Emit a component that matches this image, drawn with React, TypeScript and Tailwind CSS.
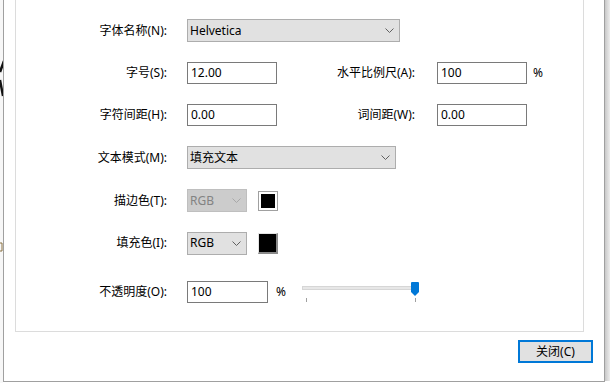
import React from 'react';

const Chevron = ({ color = '#606060' }: { color?: string }) => (
  <svg width="9" height="5" viewBox="0 0 9 5" className="shrink-0">
    <polyline points="0.5,0.5 4.5,4.5 8.5,0.5" fill="none" stroke={color} strokeWidth="1" />
  </svg>
);

function Select({ value, width, disabled }: { value: string; width: string; disabled?: boolean }) {
  return (
    <div
      className={`${width} h-[23px] flex items-center justify-between pl-[2px] pr-[5px] border ${
        disabled ? 'bg-[#cccccc] border-[#bfbfbf] text-[#838383]' : 'bg-[#e1e1e1] border-[#adadad] text-black'
      }`}
    >
      <span>{value}</span>
      <Chevron color={disabled ? '#a8a8a8' : '#606060'} />
    </div>
  );
}

function Field({ value, width }: { value: string; width: string }) {
  return (
    <div className={`${width} h-[22px] flex items-center pl-[3px] border border-[#7a7a7a] bg-white`}>
      {value}
    </div>
  );
}

function Label({ text, width = 'w-[151px]' }: { text: string; width?: string }) {
  return <div className={`${width} shrink-0 text-right`}>{text}</div>;
}

export default function App() {
  return (
    <div className="w-[610px] h-[383px] flex bg-white overflow-hidden text-[12px] leading-none text-black font-['Noto_Sans','Noto_Sans_CJK_SC',sans-serif]">
      {/* window behind the dialog */}
      <div className="w-[3px] h-full bg-[#f7f7f7] shrink-0">
        <svg width="3" height="383" viewBox="0 0 3 383">
          <line x1="4" y1="61" x2="0" y2="72" stroke="#111" strokeWidth="2.5" />
          <line x1="0" y1="80" x2="3" y2="96" stroke="#111" strokeWidth="2.5" />
          <path d="M0 243 H2 V251 H0" fill="none" stroke="#8a7040" strokeWidth="1" />
        </svg>
      </div>

      {/* dialog */}
      <div className="w-[602px] h-[382px] shrink-0 flex flex-col bg-white border-l border-r border-b border-[#a0a0a0]">
        <div className="ml-[11px] w-[569px] h-[332px] flex flex-col pt-[19px] border-l border-r border-b border-[#dcdcdc]">
          <div className="flex items-center h-[23px]">
            <Label text="字体名称(N):" />
            <div className="ml-[20px]">
              <Select value="Helvetica" width="w-[213px]" />
            </div>
          </div>

          <div className="flex items-center h-[22px] mt-[20px]">
            <Label text="字号(S):" />
            <div className="ml-[20px]">
              <Field value="12.00" width="w-[90px]" />
            </div>
            <Label text="水平比例尺(A):" width="w-[138px]" />
            <div className="ml-[22px]">
              <Field value="100" width="w-[90px]" />
            </div>
            <span className="ml-[6px]">%</span>
          </div>

          <div className="flex items-center h-[22px] mt-[20px]">
            <Label text="字符间距(H):" />
            <div className="ml-[20px]">
              <Field value="0.00" width="w-[90px]" />
            </div>
            <Label text="词间距(W):" width="w-[138px]" />
            <div className="ml-[22px]">
              <Field value="0.00" width="w-[90px]" />
            </div>
          </div>

          <div className="flex items-center h-[23px] mt-[20px]">
            <Label text="文本模式(M):" />
            <div className="ml-[20px]">
              <Select value="填充文本" width="w-[209px]" />
            </div>
          </div>

          <div className="flex items-center h-[23px] mt-[20px]">
            <Label text="描边色(T):" />
            <div className="ml-[20px]">
              <Select value="RGB" width="w-[60px]" disabled />
            </div>
            <div className="ml-[11px] w-[20px] h-[20px] border border-[#a0a0a0] bg-white p-[2px]">
              <div className="w-full h-full bg-black" />
            </div>
          </div>

          <div className="flex items-center h-[22px] mt-[20px]">
            <Label text="填充色(I):" />
            <div className="ml-[20px]">
              <Select value="RGB" width="w-[60px]" />
            </div>
            <div className="ml-[11px] w-[20px] h-[21px] bg-black border-t border-l border-t-[#e3e3e3] border-l-[#e3e3e3] border-r-2 border-b-2 border-r-[#8a8a8a] border-b-[#8a8a8a]" />
          </div>

          <div className="flex items-center h-[22px] mt-[27px]">
            <Label text="不透明度(O):" />
            <div className="ml-[20px]">
              <Field value="100" width="w-[81px]" />
            </div>
            <span className="ml-[8px]">%</span>
            <div className="ml-[15px] relative w-[120px] h-[22px]">
              <div className="absolute left-[1px] top-[5px] w-[113px] h-[4px] bg-[#e7e7e7] border border-[#d6d6d6]" />
              <svg className="absolute left-[110px] top-[1px]" width="8" height="14" viewBox="0 0 8 14">
                <path d="M1 0 H7 Q8 0 8 1 V10 L4 14 L0 10 V1 Q0 0 1 0 Z" fill="#0078d7" />
              </svg>
              <div className="absolute left-[5px] top-[17px] w-[1px] h-[4px] bg-[#a0a0a0]" />
              <div className="absolute left-[114px] top-[17px] w-[1px] h-[4px] bg-[#a0a0a0]" />
            </div>
          </div>
        </div>

        <div className="flex justify-end mt-[8px] mr-[11px]">
          <div className="w-[75px] h-[23px] flex items-center justify-center bg-[#e1e1e1] border-2 border-[#0078d7]">
            关闭(C)
          </div>
        </div>
      </div>

      {/* shadow */}
      <div className="w-[5px] h-[381px] shrink-0 bg-gradient-to-r from-[#c8c8c8] to-[#ededed]" />
    </div>
  );
}
